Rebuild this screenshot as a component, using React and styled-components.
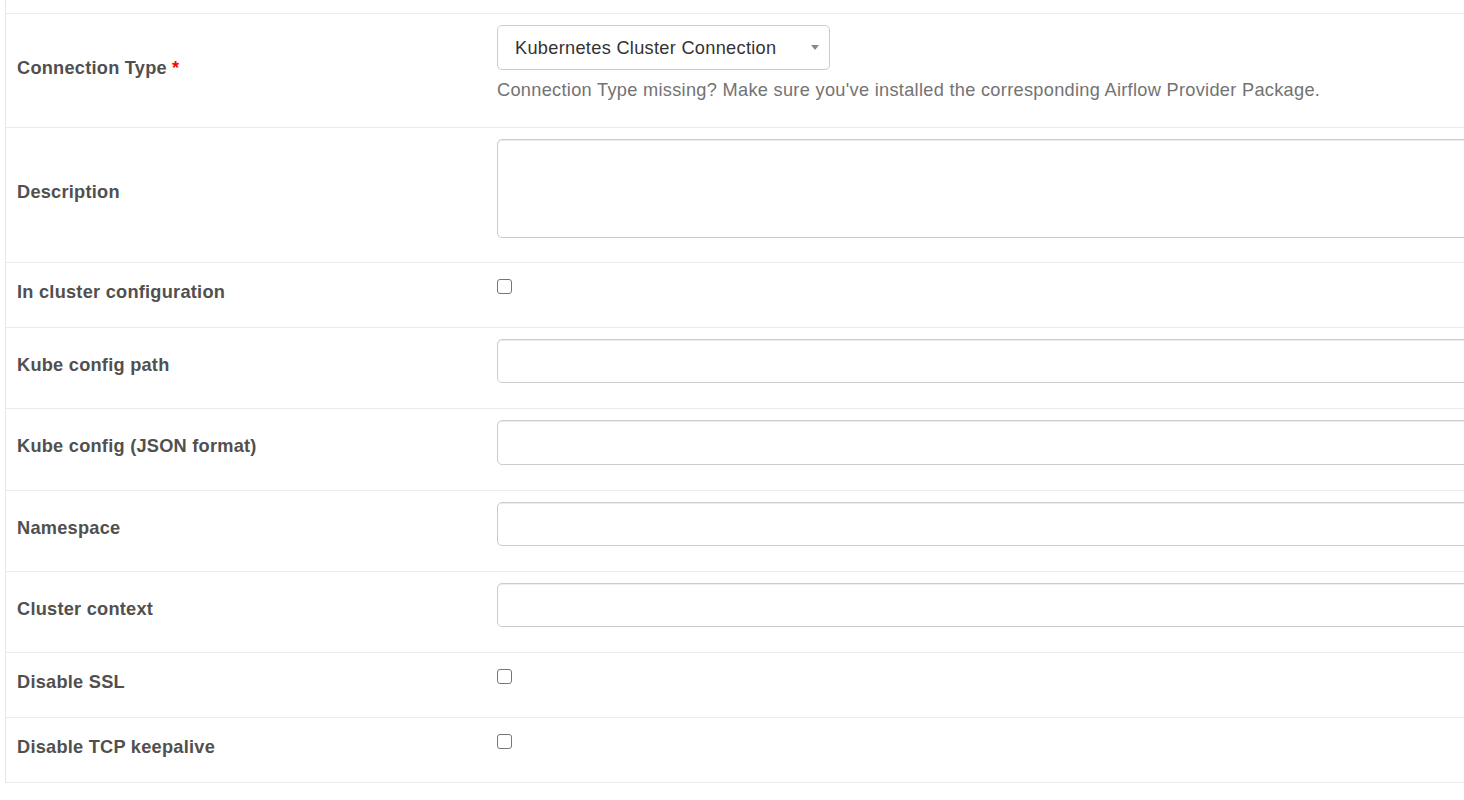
import React from "react";
import styled, { createGlobalStyle } from "styled-components";

const GlobalStyle = createGlobalStyle`
  html, body {
    margin: 0;
    padding: 0;
    background: #ffffff;
    overflow: hidden;
  }
  body {
    font-family: "Liberation Sans", Arial, Helvetica, sans-serif;
    font-size: 18.2px;
    line-height: 26px;
    letter-spacing: 0.3px;
    color: #51504f;
  }
  * { box-sizing: border-box; }
`;

const Page = styled.div`
  padding-left: 5px;
  width: 1800px;
`;

const FormTable = styled.div`
  border-left: 1px solid #e8e8e8;
  padding-top: 13px;
`;

const Row = styled.div`
  display: grid;
  grid-template-columns: 480px 1fr;
  border-top: 1px solid #ebebeb;
  &:last-child {
    border-bottom: 1px solid #ebebeb;
  }
`;

const LabelCell = styled.div`
  display: flex;
  align-items: center;
  padding: 11px 11px 12px;
`;

const FieldLabel = styled.label`
  display: inline-block;
  font-weight: bold;
  font-size: 18.2px;
  line-height: 26px;
  letter-spacing: 0.25px;
  color: #51504f;
  margin-bottom: 5px;
`;

const Required = styled.span`
  color: #ff0000;
  margin-left: 5px;
`;

const ValueCell = styled.div`
  padding: 11px 11px 12px;
`;

const SelectBox = styled.div`
  position: relative;
  width: 333px;
  height: 45px;
  border: 1px solid #cccccc;
  border-radius: 5px;
  background: #ffffff;
  padding: 0 36px 0 17px;
  display: flex;
  align-items: center;
  color: #333333;
  font-size: 18.2px;
`;

const Arrow = styled.span`
  position: absolute;
  right: 10px;
  top: 19px;
  width: 0;
  height: 0;
  border-left: 4px solid transparent;
  border-right: 4px solid transparent;
  border-top: 5px solid #888888;
`;

const HelpText = styled.p`
  margin: 7px 0 12px;
  color: #737373;
  font-size: 18.2px;
  line-height: 26px;
`;

const TextInput = styled.input`
  display: block;
  width: 100%;
  height: 44.25px;
  margin: 0 0 13px;
  border: 1px solid #cccccc;
  border-radius: 5px;
  box-shadow: inset 0 1px 1px rgba(0, 0, 0, 0.075);
  background: #ffffff;
  padding: 8px 16px;
  font-family: inherit;
  font-size: 18.2px;
  color: #555555;
  outline: none;
`;

const TextArea = styled.textarea`
  display: block;
  width: 100%;
  height: 99px;
  margin: 0 0 12px;
  border: 1px solid #cccccc;
  border-radius: 5px;
  box-shadow: inset 0 1px 1px rgba(0, 0, 0, 0.075);
  background: #ffffff;
  padding: 8px 16px;
  font-family: inherit;
  font-size: 18.2px;
  resize: none;
  outline: none;
`;

const CheckWrap = styled.div`
  height: 28px;
  padding-top: 5px;
  margin-bottom: 13px;
`;

const CheckBox = styled.input`
  appearance: none;
  -webkit-appearance: none;
  display: block;
  margin: 0;
  width: 15px;
  height: 15px;
  border: 1px solid #767676;
  border-radius: 3px;
  background: #ffffff;
`;

const fields = [
  { label: "Description", kind: "textarea" },
  { label: "In cluster configuration", kind: "check" },
  { label: "Kube config path", kind: "input" },
  { label: "Kube config (JSON format)", kind: "input" },
  { label: "Namespace", kind: "input" },
  { label: "Cluster context", kind: "input" },
  { label: "Disable SSL", kind: "check" },
  { label: "Disable TCP keepalive", kind: "check" },
];

function Field({ kind }) {
  if (kind === "textarea") return <TextArea />;
  if (kind === "check")
    return (
      <CheckWrap>
        <CheckBox type="checkbox" />
      </CheckWrap>
    );
  return <TextInput type="text" />;
}

export default function App() {
  return (
    <>
      <GlobalStyle />
      <Page>
        <FormTable>
          <Row>
            <LabelCell>
              <FieldLabel>
                Connection Type<Required>*</Required>
              </FieldLabel>
            </LabelCell>
            <ValueCell>
              <SelectBox>
                Kubernetes Cluster Connection
                <Arrow />
              </SelectBox>
              <HelpText>
                Connection Type missing? Make sure you've installed the
                corresponding Airflow Provider Package.
              </HelpText>
            </ValueCell>
          </Row>
          {fields.map((f) => (
            <Row key={f.label}>
              <LabelCell>
                <FieldLabel>{f.label}</FieldLabel>
              </LabelCell>
              <ValueCell>
                <Field kind={f.kind} />
              </ValueCell>
            </Row>
          ))}
        </FormTable>
      </Page>
    </>
  );
}
